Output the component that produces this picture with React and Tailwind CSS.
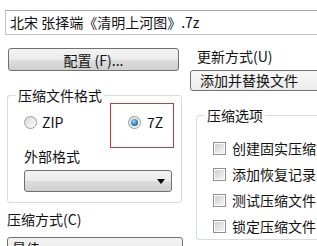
import React from "react";

const font = { fontFamily: '"Noto Sans CJK SC", "Liberation Sans", sans-serif' };

const Radio = ({ checked }) => (
  <span className="flex h-[13px] w-[13px] items-center justify-center rounded-full border border-[#9a9a9a] bg-[linear-gradient(135deg,#d9d9d9,#fcfcfc)]">
    {checked && (
      <span className="h-[7px] w-[7px] rounded-full bg-[radial-gradient(circle_at_40%_35%,#9fdcff,#2a7fc0_55%,#0d4a7a)]" />
    )}
  </span>
);

const Checkbox = () => (
  <span className="flex h-[13px] w-[13px] items-center justify-center border border-[#8f8f8f] bg-white">
    <span className="h-[9px] w-[9px] bg-[linear-gradient(135deg,#cfcfcf,#f4f4f4)]" />
  </span>
);

const Arrow = () => (
  <svg width="8" height="5" viewBox="0 0 8 5">
    <path d="M0 0h8L4 5z" fill="#000" />
  </svg>
);

// group box: legend sits on the border, content padded in an inner div
const Group = ({ label, className, inner, children }) => (
  <fieldset className={"rounded-[3px] border border-[#d5dbe0] " + className}>
    <legend className="ml-[8px] px-[2px] leading-[16px]">{label}</legend>
    <div className={inner}>{children}</div>
  </fieldset>
);

const App = () => {
  return (
    <div
      className="h-[246px] w-[317px] overflow-hidden bg-white text-[14px] text-[#111]"
      style={font}
    >
      <div className="ml-[5px] mt-[10px] h-[25px] w-[340px] border border-[#c4c4c4] border-t-[#a8a8a8] pl-[4px] leading-[23px]">
        北宋 张择端《清明上河图》.7z
      </div>

      <div className="mt-[13px] flex">
        <div className="ml-[7px] w-[176px] shrink-0">
          <button className="ml-[1px] flex h-[23px] w-[171px] items-center justify-center rounded-[3px] border border-[#707070] bg-[linear-gradient(#f3f3f3,#ebebeb_50%,#dddddd_50%,#d0d0d0)] leading-[16px]">
            配置 (F)...
          </button>

          <Group label="压缩文件格式" className="mt-[16px] w-[175px]" inner="pb-[10px] pl-[16px]">
            <div className="flex items-start">
              <div className="flex h-[38px] w-[86px] items-center gap-[5px]">
                <Radio />
                <span>ZIP</span>
              </div>
              <div className="flex h-[45px] w-[64px] items-center gap-[6px] border border-[#c9383b] pb-[6px] pl-[17px]">
                <Radio checked />
                <span>7Z</span>
              </div>
            </div>
            <div className="leading-[16px]">外部格式</div>
            <div className="mt-[6px] flex h-[22px] w-[148px] items-center justify-end rounded-[3px] border border-[#707070] bg-[linear-gradient(#f3f3f3,#ebebeb_50%,#dddddd_50%,#d0d0d0)] pr-[6px]">
              <Arrow />
            </div>
          </Group>

          <div className="mt-[8px] leading-[16px]">压缩方式(C)</div>
          <div className="mt-[10px] h-[22px] w-[176px] rounded-[3px] border border-[#707070] bg-[linear-gradient(#f3f3f3,#e6e6e6)] pl-[4px] leading-[20px]">
            最佳
          </div>
        </div>

        <div className="ml-[7px] min-w-0 flex-1">
          <div className="ml-[7px] leading-[16px]">更新方式(U)</div>
          <div className="mt-[6px] h-[21px] w-[200px] rounded-[3px] border border-[#707070] bg-[linear-gradient(#f8f8f8,#ebebeb)] pl-[9px] leading-[19px]">
            添加并替换文件
          </div>

          <Group label="压缩选项" className="ml-[6px] mt-[16px] w-[200px]" inner="pl-[16px] pt-[12px]">
            {["创建固实压缩文件", "添加恢复记录", "测试压缩文件", "锁定压缩文件"].map((t) => (
              <div key={t} className="flex h-[26px] items-center gap-[6px] whitespace-nowrap">
                <Checkbox />
                <span>{t}</span>
              </div>
            ))}
          </Group>
        </div>
      </div>
    </div>
  );
};

export default App;
